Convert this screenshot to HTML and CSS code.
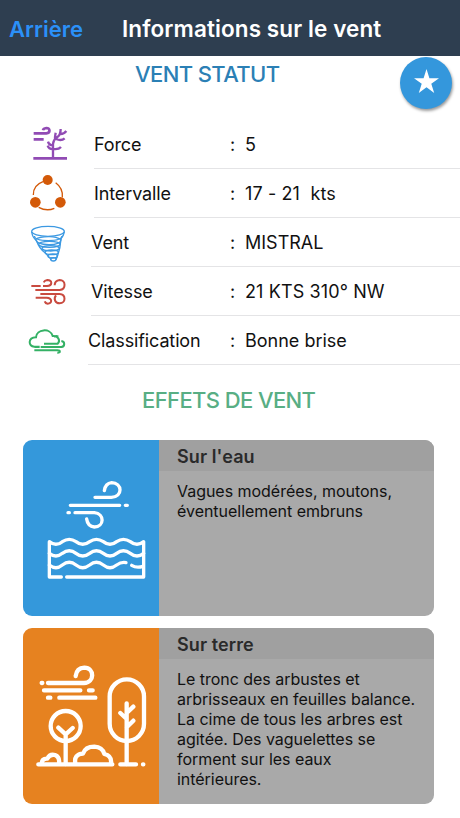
FILE: index.html
```html
<!DOCTYPE html>
<html lang="fr">
<head>
    <meta charset="UTF-8">
    <title>Informations sur le vent</title>
    <link rel="stylesheet" href="styles.css">
</head>
<body>
    <div class="header">
        <a class="back">Arrière</a>
        <h1>Informations sur le vent</h1>
    </div>
    <div class="top">
        <h2 class="statut">VENT STATUT</h2>
        <div class="fav">
            <svg viewBox="0 0 24 24"><path d="M12 0l2.8 8.8H24l-7.4 5.4 2.8 8.8L12 17.6 4.6 23l2.8-8.8L0 8.8h9.2z"/></svg>
        </div>
    </div>
    <ul class="list">
        <li>
            <svg class="icon purple" viewBox="12 15 144 144">
                <path d="M41 55H79C92 54 91 39 79 39Q70 40 69 46M41 73H71" stroke-width="8"/>
                <path d="M40 130H141" stroke-width="8"/>
                <path d="M99 130V87Q100 75 111 67Q122 60 122 42M122 57Q132 57 139 48M105 76Q104 68 107 53M84 80Q87 91 99 91M83 92Q86 102 99 103M100 102Q116 104 123 96M108 72Q124 79 134 70" stroke-width="7"/>
            </svg>
            <div class="line">
                <span class="label">Force</span><span class="colon">:</span><span class="value">5</span>
            </div>
        </li>
        <li>
            <svg class="icon brown" viewBox="12 162 144 144">
                <path d="M69 200Q39 211 40 240M107 203Q130 220 127 247M56 277Q80 290 103 280" stroke-width="4"/>
                <g class="dots"><circle cx="83" cy="195" r="15"/><circle cx="46" cy="262" r="16"/><circle cx="121" cy="262" r="16"/></g>
            </svg>
            <div class="line">
                <span class="label">Intervalle</span><span class="colon">:</span><span class="value wide">17 - 21  kts</span>
            </div>
        </li>
        <li>
            <svg class="icon blue" viewBox="12 9 144 144">
                <g stroke-width="4">
                    <ellipse cx="84" cy="49" rx="49" ry="15"/>
                    <path d="M35 51Q38 69 49 76Q58 102 76 114L94 134M133 51Q130 64 123 71Q121 105 108 134"/>
                    <path d="M43 63Q44 76 85 77Q125 76 126 63M47 73Q49 88 87 89Q123 88 123 74Q108 64 85 65Q58 65 47 73"/>
                    <ellipse cx="88" cy="88" rx="32" ry="9"/>
                    <ellipse cx="92" cy="100" rx="26" ry="8"/>
                    <ellipse cx="95" cy="112" rx="20" ry="7"/>
                    <ellipse cx="98" cy="123" rx="14" ry="6"/>
                    <ellipse cx="100" cy="133" rx="8" ry="5"/>
                </g>
            </svg>
            <div class="line short">
                <span class="label">Vent</span><span class="colon">:</span><span class="value">MISTRAL</span>
            </div>
        </li>
        <li>
            <svg class="icon red" viewBox="12 156 144 144">
                <path d="M34 213H62M69 213H81C98 212 98 195 82 195Q74 196 71 202M46 225H119C139 223 138 195 119 195Q104 197 104 211M61 237H118C139 238 138 265 119 265C105 265 100 251 108 241M47 248H80C98 249 97 266 83 266Q76 265 74 259" stroke-width="6"/>
            </svg>
            <div class="line short">
                <span class="label">Vitesse</span><span class="colon">:</span><span class="value wide">21 KTS 310° NW</span>
            </div>
        </li>
        <li>
            <svg class="icon green" viewBox="12 303 144 144">
                <path d="M59 395H43Q29 394 29 381Q30 368 48 367C49 342 91 338 98 363C115 361 122 378 113 386H72M102 366Q108 361 115 365M70 396H124C135 395 136 380 124 378M44 396H59M43 406H112C122 406 122 414 112 413M62 396H100" stroke-width="6"/>
            </svg>
            <div class="line shorter">
                <span class="label">Classification</span><span class="colon">:</span><span class="value">Bonne brise</span>
            </div>
        </li>
    </ul>
    <h2 class="effets">EFFETS DE VENT</h2>
    <div class="cards">
        <div class="card">
            <div class="pic water">
                <svg viewBox="24 31 408 528">
                    <path d="M240 203H289C325 201 322 159 290 159Q271 161 268 183M166 227H314M331 227H337M159 249H163M180 249H238C270 252 268 292 238 292Q218 290 215 268"/>
                    <path d="M139 442H103V336Q123 352 142 336Q163 322 183 336Q203 352 224 336Q244 322 265 336Q285 352 305 336Q325 322 346 336Q366 352 386 336V442H155"/>
                    <path d="M103 371Q123 387 142 371Q163 355 183 371Q203 387 224 371Q244 355 265 371Q285 387 305 371Q325 355 346 371Q366 387 386 371"/>
                    <path d="M103 406Q123 422 142 406Q163 390 183 406Q203 422 224 406Q244 390 265 406Q285 422 305 406Q319 396 333 399M350 407Q364 416 384 410"/>
                </svg>
            </div>
            <div class="info">
                <h3>Sur l'eau</h3>
                <p>Vagues modérées, moutons,<br>éventuellement embruns</p>
            </div>
        </div>
        <div class="card">
            <div class="pic land">
                <svg viewBox="24 24 408 528">
                    <g class="bold">
                        <path d="M80 189H82M99 189H207C239 188 240 144 208 143Q185 144 182 168M87 211H196M222 211H233M99 233H106M133 233H241"/>
                        <circle cx="152" cy="318" r="45"/>
                        <path d="M152 432V342M130 323L152 343L173 324"/>
                        <path d="M70 433H292M316 433H363M384 433H385"/>
                        <path d="M80 430Q81 415 97 416Q104 401 120 405Q135 411 132 430M181 430Q176 403 204 401Q211 380 238 380Q262 381 268 402Q291 407 288 430"/>
                        <rect x="284" y="178" width="103" height="185" rx="51.5"/>
                        <path d="M335 432V250M335 279L355 260M316 279L335 297M335 322L355 302"/>
                    </g>
                </svg>
            </div>
            <div class="info">
                <h3>Sur terre</h3>
                <p>Le tronc des arbustes et<br>arbrisseaux en feuilles balance.<br>La cime de tous les arbres est<br>agitée. Des vaguelettes se<br>forment sur les eaux<br>intérieures.</p>
            </div>
        </div>
    </div>
</body>
</html>
```

FILE: styles.css
```css
*{
    margin: 0;
    padding: 0;
    box-sizing: border-box;
}
body{
    width: 460px;
    height: 818px;
    overflow: hidden;
    background-color: #fff;
    color: #111;
    font-family: Inter, "Liberation Sans", sans-serif;
}
ul{
    list-style: none;
}
svg{
    display: block;
    fill: none;
}
.header{
    display: flex;
    align-items: center;
    height: 56px;
    padding: 1px 0 0 9px;
    background-color: #2e3e50;
}
.back{
    width: 113px;
    color: #2b90f8;
    font-size: 22px;
    font-weight: 600;
}
.header h1{
    color: #fff;
    font-size: 22.5px;
    font-weight: 600;
    letter-spacing: 0.1px;
    white-space: nowrap;
}
.top{
    display: flex;
    justify-content: space-between;
    height: 64px;
    padding: 1px 8px 0 135px;
}
.statut,.effets{
    font-size: 22px;
    font-weight: 500;
    line-height: 34px;
    letter-spacing: -0.6px;
    white-space: nowrap;
}
.statut{
    color: #2b80b5;
}
.fav{
    display: flex;
    align-items: center;
    justify-content: center;
    width: 52px;
    height: 52px;
    border-radius: 50%;
    background-color: #3497dc;
    box-shadow: 1px 2px 3px rgba(0,0,0,.4);
}
.fav svg{
    width: 25px;
    height: 25px;
    margin-top: -4px;
    fill: #fff;
}
.list li{
    display: flex;
    height: 49px;
    padding-left: 24px;
}
.icon{
    width: 48px;
    height: 48px;
    margin-right: 22px;
}
.purple{
    stroke: #914bb4;
}
.brown{
    stroke: #d35908;
}
.dots{
    fill: #d35908;
    stroke: none;
}
.blue{
    stroke: #3c99e2;
}
.red{
    stroke: #c94b40;
}
.green{
    stroke: #34b165;
}
.line{
    display: flex;
    flex: 1;
    align-items: center;
    border-bottom: 1px solid #e4e4e6;
    font-size: 18px;
    white-space: pre;
}
.label{
    width: 136px;
    letter-spacing: -0.12px;
}
.colon{
    width: 15px;
}
.wide{
    letter-spacing: 0.12px;
}
.short{
    margin-left: -3px;
}
.short .label{
    width: 139px;
}
.shorter{
    margin-left: -6px;
}
.shorter .label{
    width: 142px;
}
.effets{
    height: 75px;
    padding: 18px 0 0 142px;
    color: #58ae84;
}
.cards{
    display: flex;
    flex-direction: column;
    gap: 12px;
    width: 411px;
    margin-left: 23px;
}
.card{
    display: flex;
    height: 176px;
    border-radius: 9px;
    overflow: hidden;
}
.pic{
    width: 136px;
}
.pic svg{
    width: 136px;
    height: 176px;
    stroke: #fff;
    stroke-width: 10;
    stroke-linecap: round;
    stroke-linejoin: round;
}
.pic .bold{
    stroke-width: 13;
}
.water{
    background-color: #3498db;
}
.land{
    background-color: #e68220;
}
.info{
    flex: 1;
    background-color: #a9a9a9;
}
.info h3{
    height: 31px;
    padding-left: 18px;
    background-color: #a0a0a0;
    color: #2a2a2a;
    font-size: 18px;
    font-weight: 600;
    letter-spacing: 0.1px;
    line-height: 33px;
}
.info p{
    padding: 11px 0 0 18px;
    font-size: 16px;
    letter-spacing: -0.03px;
    line-height: 19.9px;
    white-space: nowrap;
}
```
